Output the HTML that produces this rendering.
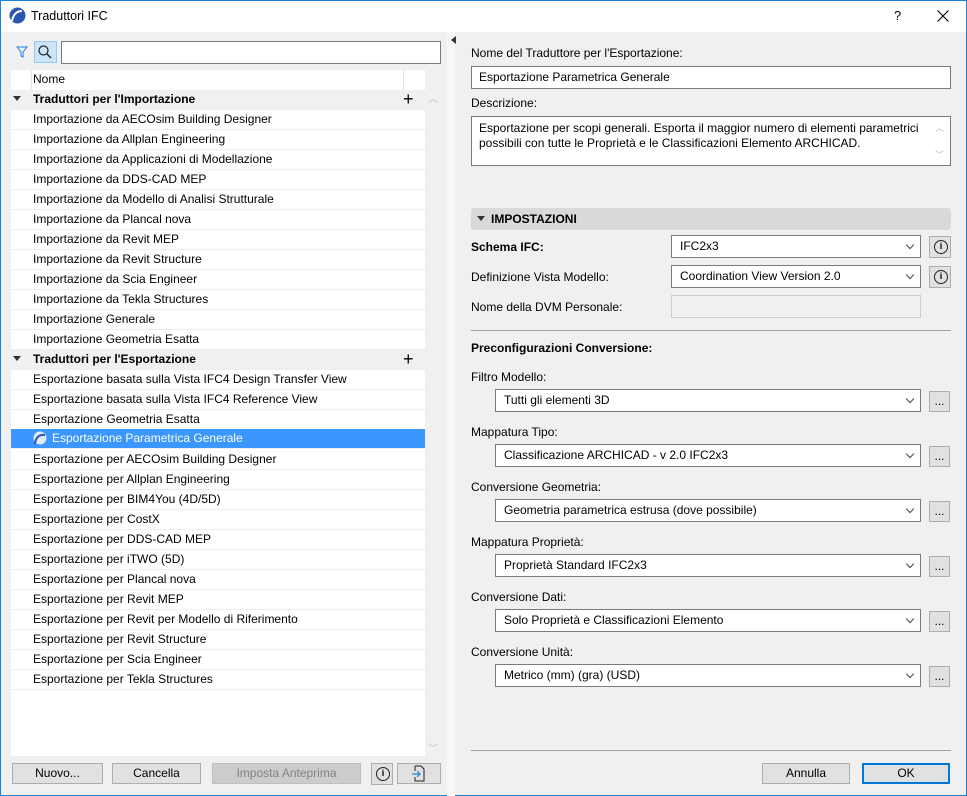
<!DOCTYPE html>
<html><head><meta charset="utf-8"><style>
*{box-sizing:border-box;margin:0;padding:0}
body{width:967px;height:796px;overflow:hidden;font-family:"Liberation Sans",sans-serif;font-size:12px;color:#000;background:#f0f0f0;position:relative}
.a{position:absolute}
.win{left:0;top:0;width:967px;height:796px;border:1px solid #1883d7;background:#f0f0f0}
.title{left:1px;top:1px;width:965px;height:31px;background:#fff}
.list{left:11px;top:70px;width:414px;height:686px;background:#fff}
.row{position:absolute;left:0;width:414px;height:20px;line-height:19px;padding-left:22px;border-bottom:1px solid #eee;white-space:nowrap}
.grp{background:#f0f0f0;font-weight:bold}
.sel{background:#3b96fd;color:#fff}
.lbl{position:absolute;left:471px;white-space:nowrap}
.inp{position:absolute;background:#fff;border:1px solid #7a7a7a;padding-left:7px;line-height:20px;white-space:nowrap}
.sel2{position:absolute;background:#fff;border:1px solid #7a7a7a;padding-left:8px;line-height:21px;height:23px}
.sel2:after{content:"";position:absolute;right:7px;top:6px;width:5px;height:5px;border-right:1px solid #444;border-bottom:1px solid #444;transform:rotate(45deg)}
.btn{position:absolute;background:#e1e1e1;border:1px solid #adadad;text-align:center;line-height:19px;height:21px}
.info{width:22px;height:22px}
.info:before{content:"i";position:absolute;left:4px;top:3px;width:12px;height:12px;border:1px solid #222;border-radius:50%;font-size:9px;line-height:11px;font-weight:bold;text-align:center}
</style></head><body>
<div class="a win"></div>
<div class="a title"></div>
<svg class="a" style="left:9px;top:7px" width="17" height="17" viewBox="0 0 17 17"><circle cx="8.5" cy="8.5" r="8" fill="#2a56b0"/><path d="M3 14 Q5 4 13 4" stroke="#fff" stroke-width="2" fill="none"/></svg>
<div class="a" style="left:31px;top:9px;font-size:12.5px">Traduttori IFC</div>
<div class="a" style="left:894px;top:8px;font-size:13px">?</div>
<svg class="a" style="left:937px;top:10px" width="12" height="12"><path d="M0.5 0.5L11.5 11.5M11.5 0.5L0.5 11.5" stroke="#000" stroke-width="1.1"/></svg>

<!-- left panel -->
<svg class="a" style="left:16px;top:45px" width="12" height="14"><path d="M1 2 H11 L7 7 V12 L5 11 V7 Z" fill="none" stroke="#1e7be0" stroke-width="1"/></svg>
<div class="a" style="left:34px;top:41px;width:23px;height:22px;background:#cce4f7;border:1px solid #99c9ef"></div>
<svg class="a" style="left:37px;top:44px" width="16" height="16"><circle cx="6.5" cy="6.5" r="4.5" fill="none" stroke="#222" stroke-width="1.2"/><path d="M10 10 L14 14" stroke="#222" stroke-width="1.4"/></svg>
<div class="a" style="left:61px;top:41px;width:380px;height:23px;background:#fff;border:1px solid #7a7a7a"></div>
<div class="a list">
<div class="row" style="top:0;border-bottom:none">Nome</div>
<div class="a" style="left:20px;top:0;width:1px;height:20px;background:#e5e5e5"></div>
<div class="a" style="left:392px;top:0;width:1px;height:20px;background:#e5e5e5"></div>
<div class="row grp" style="top:20px">Traduttori per l'Importazione</div>
<div class="row" style="top:40px">Importazione da AECOsim Building Designer</div>
<div class="row" style="top:60px">Importazione da Allplan Engineering</div>
<div class="row" style="top:80px">Importazione da Applicazioni di Modellazione</div>
<div class="row" style="top:100px">Importazione da DDS-CAD MEP</div>
<div class="row" style="top:120px">Importazione da Modello di Analisi Strutturale</div>
<div class="row" style="top:140px">Importazione da Plancal nova</div>
<div class="row" style="top:160px">Importazione da Revit MEP</div>
<div class="row" style="top:180px">Importazione da Revit Structure</div>
<div class="row" style="top:200px">Importazione da Scia Engineer</div>
<div class="row" style="top:220px">Importazione da Tekla Structures</div>
<div class="row" style="top:240px">Importazione Generale</div>
<div class="row" style="top:260px">Importazione Geometria Esatta</div>
<div class="row grp" style="top:280px">Traduttori per l'Esportazione</div>
<div class="row" style="top:300px">Esportazione basata sulla Vista IFC4 Design Transfer View</div>
<div class="row" style="top:320px">Esportazione basata sulla Vista IFC4 Reference View</div>
<div class="row" style="top:340px">Esportazione Geometria Esatta</div>
<div class="row sel" style="top:359px;padding-left:41px">Esportazione Parametrica Generale</div>
<div class="row" style="top:380px">Esportazione per AECOsim Building Designer</div>
<div class="row" style="top:400px">Esportazione per Allplan Engineering</div>
<div class="row" style="top:420px">Esportazione per BIM4You (4D/5D)</div>
<div class="row" style="top:440px">Esportazione per CostX</div>
<div class="row" style="top:460px">Esportazione per DDS-CAD MEP</div>
<div class="row" style="top:480px">Esportazione per iTWO (5D)</div>
<div class="row" style="top:500px">Esportazione per Plancal nova</div>
<div class="row" style="top:520px">Esportazione per Revit MEP</div>
<div class="row" style="top:540px">Esportazione per Revit per Modello di Riferimento</div>
<div class="row" style="top:560px">Esportazione per Revit Structure</div>
<div class="row" style="top:580px">Esportazione per Scia Engineer</div>
<div class="row" style="top:600px">Esportazione per Tekla Structures</div>
</div>
<svg class="a" style="left:13px;top:96px" width="8" height="6"><path d="M0 0H8L4 5Z" fill="#333"/></svg>
<svg class="a" style="left:13px;top:356px" width="8" height="6"><path d="M0 0H8L4 5Z" fill="#333"/></svg>
<div class="a" style="left:403px;top:90px;font-size:18px;line-height:18px">+</div>
<div class="a" style="left:403px;top:350px;font-size:18px;line-height:18px">+</div>
<svg class="a" style="left:33px;top:431px" width="14" height="14"><circle cx="7" cy="7" r="6.5" fill="#dfe9f8"/><path d="M2 13 Q3 3 12 4" stroke="#2a56b0" stroke-width="2" fill="none"/></svg>
<div class="a" style="left:428px;top:90px;color:#bbb;font-size:10px">︿</div>
<div class="a" style="left:428px;top:740px;color:#bbb;font-size:10px">﹀</div>
<div class="a" style="left:447px;top:32px;width:8px;height:764px;background:#f7f7f7"></div>
<svg class="a" style="left:451px;top:36px" width="5" height="8"><path d="M5 0V8L0 4Z" fill="#333"/></svg>

<div class="btn" style="left:12px;top:763px;width:91px">Nuovo...</div>
<div class="btn" style="left:112px;top:763px;width:89px">Cancella</div>
<div class="btn" style="left:212px;top:763px;width:149px;background:#ccc;border-color:#bfbfbf;color:#838383">Imposta Anteprima</div>
<div class="btn info" style="left:371px;top:763px"></div>
<div class="btn" style="left:397px;top:763px;width:44px"></div>
<svg class="a" style="left:411px;top:765px" width="16" height="18"><path d="M4 1H10L13 4V16H4V12M4 6V1" fill="none" stroke="#222"/><path d="M1 9H9M6 6L9 9L6 12" fill="none" stroke="#1e7be0" stroke-width="1.2"/></svg>

<!-- right panel -->
<div class="lbl" style="top:46px">Nome del Traduttore per l'Esportazione:</div>
<div class="inp" style="left:471px;top:66px;width:480px;height:23px">Esportazione Parametrica Generale</div>
<div class="lbl" style="top:96px">Descrizione:</div>
<div class="inp" style="left:471px;top:116px;width:480px;height:50px;line-height:15px;padding-top:4px">Esportazione per scopi generali. Esporta il maggior numero di elementi parametrici<br>possibili con tutte le Proprietà e le Classificazioni Elemento ARCHICAD.</div>
<div class="a" style="left:935px;top:121px;color:#bbb;font-size:9px">︿</div>
<div class="a" style="left:935px;top:148px;color:#bbb;font-size:9px">﹀</div>
<div class="a" style="left:471px;top:208px;width:480px;height:22px;background:#d9d9d9;border-radius:3px"></div>
<svg class="a" style="left:477px;top:216px" width="8" height="6"><path d="M0 0H8L4 5Z" fill="#333"/></svg>
<div class="lbl" style="left:491px;top:212px;font-weight:bold">IMPOSTAZIONI</div>
<div class="lbl" style="top:240px;font-weight:bold">Schema IFC:</div>
<div class="sel2" style="left:671px;top:235px;width:250px">IFC2x3</div>
<div class="btn info" style="left:929px;top:236px"></div>
<div class="lbl" style="top:270px">Definizione Vista Modello:</div>
<div class="sel2" style="left:671px;top:265px;width:250px">Coordination View Version 2.0</div>
<div class="btn info" style="left:929px;top:266px"></div>
<div class="lbl" style="top:300px">Nome della DVM Personale:</div>
<div class="a" style="left:671px;top:295px;width:250px;height:23px;border:1px solid #ccc;background:#f0f0f0"></div>
<div class="a" style="left:471px;top:330px;width:480px;height:1px;background:#a0a0a0"></div>
<div class="lbl" style="top:341px;font-weight:bold">Preconfigurazioni Conversione:</div>

<div class="lbl" style="top:370px">Filtro Modello:</div>
<div class="sel2" style="left:495px;top:389px;width:426px">Tutti gli elementi 3D</div>
<div class="btn" style="left:929px;top:391px;width:21px">...</div>
<div class="lbl" style="top:425px">Mappatura Tipo:</div>
<div class="sel2" style="left:495px;top:444px;width:426px">Classificazione ARCHICAD - v 2.0 IFC2x3</div>
<div class="btn" style="left:929px;top:446px;width:21px">...</div>
<div class="lbl" style="top:480px">Conversione Geometria:</div>
<div class="sel2" style="left:495px;top:499px;width:426px">Geometria parametrica estrusa (dove possibile)</div>
<div class="btn" style="left:929px;top:501px;width:21px">...</div>
<div class="lbl" style="top:535px">Mappatura Proprietà:</div>
<div class="sel2" style="left:495px;top:554px;width:426px">Proprietà Standard IFC2x3</div>
<div class="btn" style="left:929px;top:556px;width:21px">...</div>
<div class="lbl" style="top:590px">Conversione Dati:</div>
<div class="sel2" style="left:495px;top:609px;width:426px">Solo Proprietà e Classificazioni Elemento</div>
<div class="btn" style="left:929px;top:611px;width:21px">...</div>
<div class="lbl" style="top:645px">Conversione Unità:</div>
<div class="sel2" style="left:495px;top:664px;width:426px">Metrico (mm) (gra) (USD)</div>
<div class="btn" style="left:929px;top:666px;width:21px">...</div>

<div class="a" style="left:471px;top:750px;width:480px;height:1px;background:#a0a0a0"></div>
<div class="btn" style="left:762px;top:763px;width:88px">Annulla</div>
<div class="btn" style="left:862px;top:763px;width:88px;border:2px solid #0078d7;line-height:17px">OK</div>
</body></html>
